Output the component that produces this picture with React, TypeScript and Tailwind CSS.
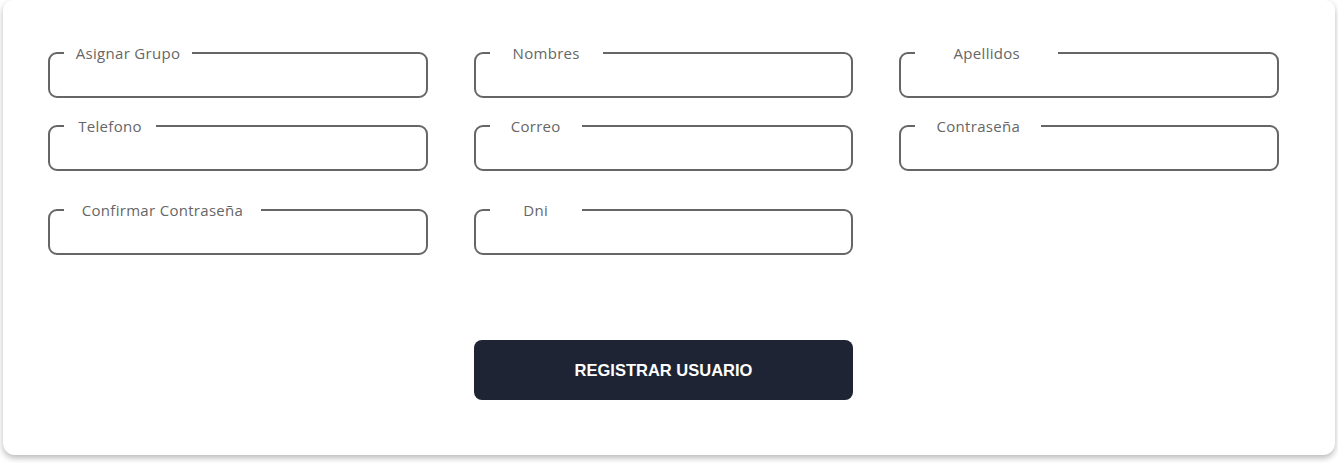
const fields = [
  { label: 'Asignar Grupo', width: 'w-[128px]' },
  { label: 'Nombres', width: 'w-[113px]' },
  { label: 'Apellidos', width: 'w-[143px]' },
  { label: 'Telefono', width: 'w-[92px]' },
  { label: 'Correo', width: 'w-[92px]' },
  { label: 'Contraseña', width: 'w-[126px]' },
  { label: 'Confirmar Contraseña', width: 'w-[197px]' },
  { label: 'Dni', width: 'w-[92px]' },
]

function Field({ label, width }: { label: string; width: string }) {
  return (
    <fieldset className="h-[55px] rounded-[9px] border-2 border-[#666666] px-[14px]">
      <legend className="text-left">
        <span className={`${width} block text-center font-['Open_Sans',sans-serif] text-[15px] leading-5 tracking-[0.3px] text-[#666666]`}>
          {label}
        </span>
      </legend>
      <input className="h-[30px] w-full bg-transparent outline-none" aria-label={label} />
    </fieldset>
  )
}

export default function App() {
  return (
    <div className="min-h-screen bg-white px-[3px]">
      <div className="h-[455px] rounded-b-[12px] rounded-t-[10px] bg-white pl-[45px] pr-[56px] pt-[43px] shadow-[0_3px_6px_rgba(0,0,0,0.28)]">
        <div className="grid grid-cols-3 gap-x-[46px] gap-y-[18px]">
          {fields.slice(0, 6).map((field) => (
            <Field key={field.label} label={field.label} width={field.width} />
          ))}
        </div>
        <div className="mt-[29px] grid grid-cols-3 gap-x-[46px]">
          {fields.slice(6).map((field) => (
            <Field key={field.label} label={field.label} width={field.width} />
          ))}
        </div>
        <div className="mt-[85px] grid grid-cols-3 gap-x-[46px]">
          <button
            type="button"
            className="col-start-2 h-[60px] rounded-[8px] bg-[#1e2433] font-['Liberation_Sans',sans-serif] text-[16.5px] font-bold text-white"
          >
            REGISTRAR USUARIO
          </button>
        </div>
      </div>
    </div>
  )
}
